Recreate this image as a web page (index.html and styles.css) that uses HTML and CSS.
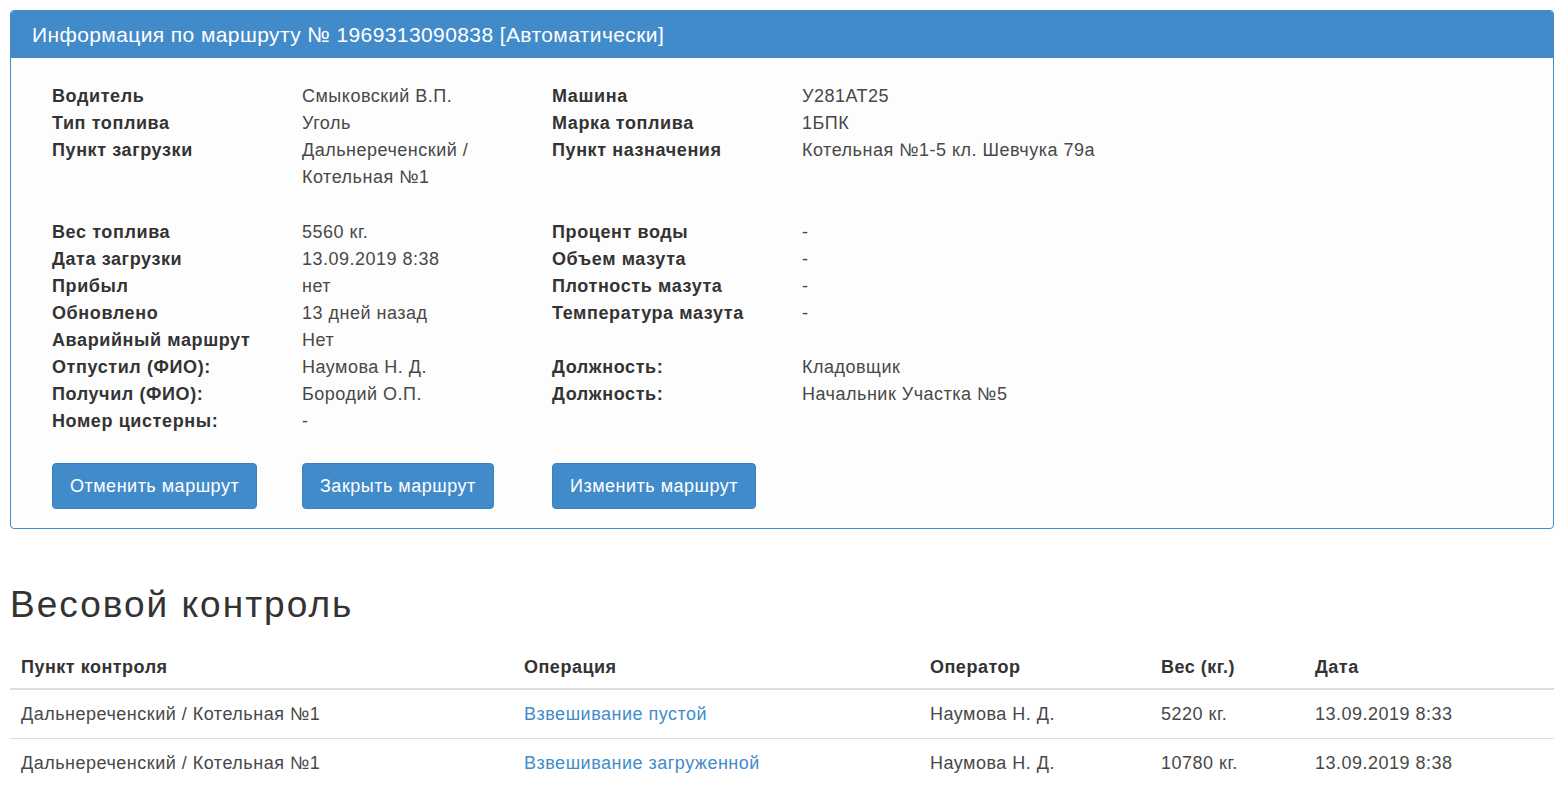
FILE: index.html
```html
<!DOCTYPE html>
<html lang="ru">
<head>
    <meta charset="UTF-8">
    <title>Информация по маршруту</title>
    <link rel="stylesheet" href="styles.css">
</head>
<body>
    <div class="panel">
        <div class="panel-heading">Информация по маршруту № 1969313090838 [Автоматически]</div>
        <div class="panel-body">
            <div class="info-grid">
                <div class="label">Водитель</div>
                <div class="value">Смыковский В.П.</div>
                <div class="label">Машина</div>
                <div class="value">У281АТ25</div>

                <div class="label">Тип топлива</div>
                <div class="value">Уголь</div>
                <div class="label">Марка топлива</div>
                <div class="value">1БПК</div>

                <div class="label">Пункт загрузки</div>
                <div class="value">Дальнереченский / Котельная №1</div>
                <div class="label">Пункт назначения</div>
                <div class="value">Котельная №1-5 кл. Шевчука 79а</div>
            </div>

            <div class="info-grid group">
                <div class="label">Вес топлива</div>
                <div class="value">5560 кг.</div>
                <div class="label">Процент воды</div>
                <div class="value">-</div>

                <div class="label">Дата загрузки</div>
                <div class="value">13.09.2019 8:38</div>
                <div class="label">Объем мазута</div>
                <div class="value">-</div>

                <div class="label">Прибыл</div>
                <div class="value">нет</div>
                <div class="label">Плотность мазута</div>
                <div class="value">-</div>

                <div class="label">Обновлено</div>
                <div class="value">13 дней назад</div>
                <div class="label">Температура мазута</div>
                <div class="value">-</div>

                <div class="label">Аварийный маршрут</div>
                <div class="value">Нет</div>
                <div class="label"></div>
                <div class="value"></div>

                <div class="label">Отпустил (ФИО):</div>
                <div class="value">Наумова Н. Д.</div>
                <div class="label">Должность:</div>
                <div class="value">Кладовщик</div>

                <div class="label">Получил (ФИО):</div>
                <div class="value">Бородий О.П.</div>
                <div class="label">Должность:</div>
                <div class="value">Начальник Участка №5</div>

                <div class="label">Номер цистерны:</div>
                <div class="value">-</div>
                <div class="label"></div>
                <div class="value"></div>
            </div>

            <div class="actions">
                <div class="action-cell"><button class="btn">Отменить маршрут</button></div>
                <div class="action-cell"><button class="btn">Закрыть маршрут</button></div>
                <div class="action-cell"><button class="btn">Изменить маршрут</button></div>
            </div>
        </div>
    </div>

    <h2 class="section-title">Весовой контроль</h2>

    <table class="weights">
        <thead>
            <tr>
                <th class="col-point">Пункт контроля</th>
                <th class="col-op">Операция</th>
                <th class="col-operator">Оператор</th>
                <th class="col-weight">Вес (кг.)</th>
                <th>Дата</th>
            </tr>
        </thead>
        <tbody>
            <tr>
                <td>Дальнереченский / Котельная №1</td>
                <td><a href="#">Взвешивание пустой</a></td>
                <td>Наумова Н. Д.</td>
                <td>5220 кг.</td>
                <td>13.09.2019 8:33</td>
            </tr>
            <tr>
                <td>Дальнереченский / Котельная №1</td>
                <td><a href="#">Взвешивание загруженной</a></td>
                <td>Наумова Н. Д.</td>
                <td>10780 кг.</td>
                <td>13.09.2019 8:38</td>
            </tr>
        </tbody>
    </table>
</body>
</html>
```

FILE: styles.css
```css
body {
    margin: 0;
    padding: 10px 12px 0 10px;
    font-family: "Liberation Sans", Arial, sans-serif;
    font-size: 18px;
    letter-spacing: 0.5px;
    color: #333;
    background: #fff;
}

/* Route panel */
.panel {
    border: 1px solid #428bca;
    border-radius: 4px;
    background: #fdfdfd;
}

.panel-heading {
    background: #428bca;
    color: #fff;
    font-size: 21px;
    letter-spacing: 0.4px;
    line-height: 26px;
    padding: 11px 21px 10px;
    border-radius: 3px 3px 0 0;
}

.panel-body {
    padding: 25px 41px 19px;
}

.info-grid {
    display: grid;
    grid-template-columns: 250px 250px 250px 1fr;
    line-height: 27px;
}

.info-grid.group {
    margin-top: 28px;
}

.label {
    font-weight: bold;
    letter-spacing: 0.6px;
}

.value {
    color: #484848;
    padding-right: 50px;
}

.actions {
    display: grid;
    grid-template-columns: 250px 250px 250px 1fr;
    margin-top: 28px;
}

.btn {
    font-family: inherit;
    font-size: 18px;
    letter-spacing: 0.5px;
    color: #fff;
    background: #428bca;
    border: 1px solid #3b80bd;
    border-radius: 4px;
    height: 46px;
    padding: 0 17px;
    cursor: pointer;
}

/* Weight control */
.section-title {
    font-size: 37px;
    font-weight: normal;
    letter-spacing: 2px;
    line-height: 40px;
    margin: 56px 0 18px;
}

.weights {
    width: 100%;
    border-collapse: collapse;
}

.weights th,
.weights td {
    text-align: left;
    padding: 12px 11px;
    line-height: 24px;
}

.weights th {
    padding-bottom: 9px;
    border-bottom: 2px solid #ddd;
}

.weights td {
    border-top: 1px solid #ddd;
    color: #484848;
}

.col-point { width: 481px; }
.col-op { width: 384px; }
.col-operator { width: 209px; }
.col-weight { width: 132px; }

.weights a {
    color: #428bca;
    text-decoration: none;
}
```
